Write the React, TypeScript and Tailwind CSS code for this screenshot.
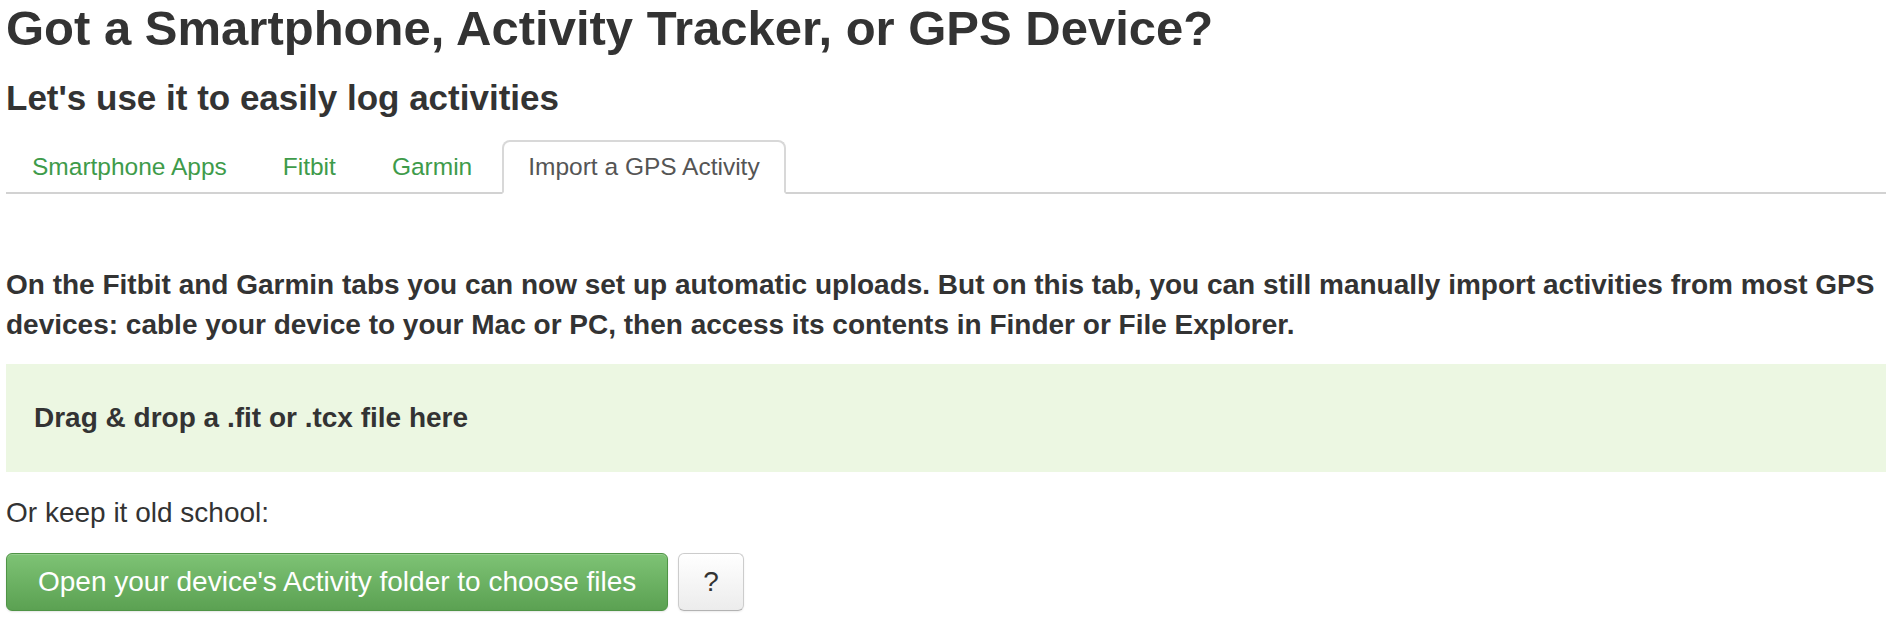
import React from "react";

const tabs = ["Smartphone Apps", "Fitbit", "Garmin"];

export default function App() {
  return (
    <div className="min-h-[626px] bg-white pl-[6px] pr-[12px] font-['Liberation_Sans',Arial,sans-serif] text-[#333333]">
      <h1 className="pt-[2px] text-[49px] font-bold leading-[1.1]">
        Got a Smartphone, Activity Tracker, or GPS Device?
      </h1>
      <h2 className="mt-[23px] text-[35px] font-bold leading-[1.1]">
        Let's use it to easily log activities
      </h2>
      <ul className="mt-[23px] flex border-b-2 border-[#d2d2d2]">
        {tabs.map((t) => (
          <li key={t} className="-mb-[2px] mr-[4px]">
            <a className="block rounded-t-[8px] border-2 border-transparent px-[24px] py-[8px] text-[24.5px] leading-[34px] text-[#3e9b4a]">
              {t}
            </a>
          </li>
        ))}
        <li className="-mb-[2px] mr-[4px]">
          <a className="block rounded-t-[8px] border-2 border-[#d8d8d8] border-b-white bg-white px-[24px] py-[8px] text-[24.5px] leading-[34px] text-[#555555]">
            Import a GPS Activity
          </a>
        </li>
      </ul>
      <p className="mt-[71px] text-[28px] font-bold leading-[40px]">
        On the Fitbit and Garmin tabs you can now set up automatic uploads. But on this tab, you can still manually import activities from most GPS devices: cable your device to your Mac or PC, then access its contents in Finder or File Explorer.
      </p>
      <div className="mt-[19px] bg-[#ecf7e2] px-[28px] py-[34px] text-[28px] font-bold leading-[40px]">
        Drag &amp; drop a .fit or .tcx file here
      </div>
      <p className="mt-[21px] text-[28px] leading-[40px]">Or keep it old school:</p>
      <div className="mt-[20px] flex gap-[10px]">
        <button className="rounded-[6px] border border-[#4f9446] bg-gradient-to-b from-[#7ec375] to-[#5ba152] px-[31px] py-[8px] text-[28px] leading-[40px] text-white shadow-[inset_0_1px_0_rgba(255,255,255,0.2),0_1px_2px_rgba(0,0,0,0.1)]">
          Open your device's Activity folder to choose files
        </button>
        <button className="rounded-[6px] border border-[#cccccc] border-b-[#b3b3b3] bg-gradient-to-b from-white to-[#ececec] px-[24px] py-[8px] text-[28px] leading-[40px] text-[#333333] shadow-[0_1px_2px_rgba(0,0,0,0.08)]">
          ?
        </button>
      </div>
    </div>
  );
}
